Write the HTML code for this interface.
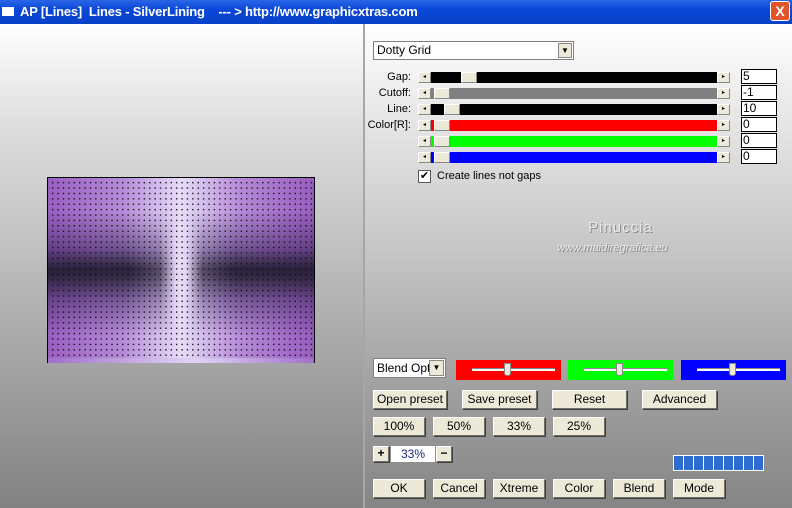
<!DOCTYPE html>
<html><head><style>
*{margin:0;padding:0;box-sizing:border-box}
body{width:792px;height:508px;position:relative;overflow:hidden;font-family:"Liberation Sans",sans-serif;font-size:11px;background:#999}
.a{position:absolute}
#title{left:0;top:0;width:792px;height:24px;background:linear-gradient(#2a66e6,#0a46d8 40%,#0842c8);color:#fff;font-size:13px;font-weight:bold;line-height:24px;letter-spacing:-0.2px}
#left{left:0;top:24px;width:363px;height:484px;background:linear-gradient(#fff 0%,#dcdcdc 22%,#b0b0b0 60%,#828282 100%)}
#div{left:363px;top:24px;width:2px;height:484px;background:#a8a89a}
#right{left:365px;top:24px;width:427px;height:484px;background:linear-gradient(#fff 0%,#ececec 15%,#c8c8c8 45%,#a4a4a4 72%,#858585 100%)}
#img{left:47px;top:177px;width:268px;height:186px;border:1px solid #000;border-bottom:none;overflow:hidden;
background:linear-gradient(90deg,#9a5ec2,#b58ad8 28%,#e6dcf8 50%,#b68ad8 72%,#985cc0)}
#band{position:absolute;left:0;top:0;right:0;bottom:0;
background:linear-gradient(transparent 18%,rgba(60,40,90,.55) 38%,rgba(35,30,50,.95) 49%,rgba(35,30,50,.9) 53%,rgba(60,40,90,.5) 66%,transparent 85%);
-webkit-mask-image:linear-gradient(90deg,#000 30%,rgba(0,0,0,.75) 42%,transparent 48%,transparent 52%,rgba(0,0,0,.75) 58%,#000 70%);
mask-image:linear-gradient(90deg,#000 30%,rgba(0,0,0,.75) 42%,transparent 48%,transparent 52%,rgba(0,0,0,.75) 58%,#000 70%)}
#dots{position:absolute;left:0;top:0;right:0;bottom:5px;background:radial-gradient(circle,#111 0.6px,transparent 0.9px) 2px 2px/5.4px 5.4px}
#img:after{content:"";position:absolute;left:0;right:0;bottom:0;height:5px;background:linear-gradient(90deg,#a070c8,#e0d4f6 55%,#a070c8)}
.btn{position:absolute;background:#ece9d8;border:1px solid;border-color:#fff #716f64 #716f64 #fff;box-shadow:1px 1px 0 #404040;text-align:center;font-size:12px;color:#000}
.lbl{position:absolute;width:60px;text-align:right;font-size:11px;color:#000}
.sb{position:absolute;width:13px;height:11px;background:#ece9d8;border:1px solid;border-color:#fff #888 #888 #fff;font-size:6px;line-height:9px;text-align:center}
.tr{position:absolute;left:431px;width:286px;height:11px}
.th{position:absolute;width:16px;height:11px;background:#ece9d8;border:1px solid;border-color:#fff #888 #888 #fff}
.vb{position:absolute;left:741px;width:36px;height:15px;background:#fff;border:1px solid #000;font-size:12px;line-height:13px;padding-left:1px}
.cb{position:absolute;height:20px;top:360px}
.cb i{position:absolute;left:16px;right:6px;top:8px;height:3px;background:#fff;border-top:1px solid #888}
.cb b{position:absolute;top:3px;width:7px;height:13px;background:#ece9d8;border:1px solid #888;border-radius:0 0 3px 3px}
</style></head><body>
<div id="title" class="a"><span class="a" style="left:2px;top:7px;width:12px;height:9px;background:#fff"></span><span class="a" style="left:20px">AP [Lines]&nbsp; Lines - SilverLining &nbsp;&nbsp; --- &gt; http://www.graphicxtras.com</span>
<span class="a" style="left:770px;top:1px;width:20px;height:20px;background:#e0542c;border:1px solid #fff;border-radius:3px;text-align:center;line-height:18px;font-size:14px">X</span></div>
<div id="left" class="a"></div>
<div id="div" class="a"></div>
<div id="right" class="a"></div>
<div id="img" class="a"><div id="band"></div><div id="dots"></div></div>

<div class="a" style="left:373px;top:41px;width:201px;height:19px;background:#fff;border:1px solid #7f7f7f;font-size:12px;line-height:17px;padding-left:3px">Dotty Grid<span class="a" style="right:1px;top:1px;width:14px;height:15px;background:#ece9d8;border:1px solid #888;font-size:8px;line-height:13px;text-align:center">▼</span></div>

<div class="lbl" style="left:351px;top:71px">Gap:</div>
<div class="lbl" style="left:351px;top:87px">Cutoff:</div>
<div class="lbl" style="left:351px;top:103px">Line:</div>
<div class="lbl" style="left:351px;top:119px">Color[R]:</div>

<div class="sb" style="left:418px;top:72px">◂</div><div class="tr" style="top:72px;background:#000"></div><div class="th" style="left:461px;top:72px"></div><div class="sb" style="left:717px;top:72px">▸</div>
<div class="sb" style="left:418px;top:88px">◂</div><div class="tr" style="top:88px;background:#808080"></div><div class="th" style="left:434px;top:88px"></div><div class="sb" style="left:717px;top:88px">▸</div>
<div class="sb" style="left:418px;top:104px">◂</div><div class="tr" style="top:104px;background:#000"></div><div class="th" style="left:444px;top:104px"></div><div class="sb" style="left:717px;top:104px">▸</div>
<div class="sb" style="left:418px;top:120px">◂</div><div class="tr" style="top:120px;background:#f00"></div><div class="th" style="left:434px;top:120px"></div><div class="sb" style="left:717px;top:120px">▸</div>
<div class="sb" style="left:418px;top:136px">◂</div><div class="tr" style="top:136px;background:#0f0"></div><div class="th" style="left:434px;top:136px"></div><div class="sb" style="left:717px;top:136px">▸</div>
<div class="sb" style="left:418px;top:152px">◂</div><div class="tr" style="top:152px;background:#00f"></div><div class="th" style="left:434px;top:152px"></div><div class="sb" style="left:717px;top:152px">▸</div>

<div class="vb" style="top:69px">5</div>
<div class="vb" style="top:85px">-1</div>
<div class="vb" style="top:101px">10</div>
<div class="vb" style="top:117px">0</div>
<div class="vb" style="top:133px">0</div>
<div class="vb" style="top:149px">0</div>

<div class="a" style="left:418px;top:170px;width:13px;height:13px;background:#fff;border:1px solid #555;font-size:11px;line-height:11px;text-align:center">✔</div>
<div class="a" style="left:437px;top:170px;font-size:11px">Create lines not gaps</div>

<div class="a" style="left:588px;top:219px;font-size:15px;color:#e8e8e8;text-shadow:1px 1px 0 #888;letter-spacing:1px">Pinuccia</div>
<div class="a" style="left:557px;top:242px;font-size:11px;font-style:italic;color:#e8e8e8;text-shadow:1px 1px 0 #888">www.maidiregrafica.eu</div>

<div class="a" style="left:373px;top:358px;width:73px;height:20px;background:#fff;border:1px solid #7f7f7f;font-size:12px;line-height:18px;padding-left:3px;overflow:hidden;white-space:nowrap">Blend Optio<span class="a" style="right:1px;top:1px;width:15px;height:16px;background:#ece9d8;border:1px solid #888;font-size:8px;line-height:14px;text-align:center">▼</span></div>
<div class="cb" style="left:456px;width:105px;background:#f00"><i></i><b style="left:48px"></b></div>
<div class="cb" style="left:568px;width:105px;background:#0f0"><i></i><b style="left:48px"></b></div>
<div class="cb" style="left:681px;width:105px;background:#00f"><i></i><b style="left:48px"></b></div>

<div class="btn" style="left:373px;top:390px;width:74px;height:19px;line-height:17px">Open preset</div>
<div class="btn" style="left:462px;top:390px;width:75px;height:19px;line-height:17px">Save preset</div>
<div class="btn" style="left:552px;top:390px;width:75px;height:19px;line-height:17px">Reset</div>
<div class="btn" style="left:642px;top:390px;width:75px;height:19px;line-height:17px">Advanced</div>

<div class="btn" style="left:373px;top:417px;width:52px;height:19px;line-height:17px">100%</div>
<div class="btn" style="left:433px;top:417px;width:52px;height:19px;line-height:17px">50%</div>
<div class="btn" style="left:493px;top:417px;width:52px;height:19px;line-height:17px">33%</div>
<div class="btn" style="left:553px;top:417px;width:52px;height:19px;line-height:17px">25%</div>

<div class="btn" style="left:373px;top:446px;width:16px;height:16px;line-height:13px;font-weight:bold">+</div>
<div class="a" style="left:391px;top:446px;width:44px;height:16px;background:#fff;color:#1a237e;font-size:12px;text-align:center;line-height:16px">33%</div>
<div class="btn" style="left:436px;top:446px;width:16px;height:16px;line-height:13px;font-weight:bold">−</div>

<div class="a" style="left:673px;top:455px;width:91px;height:16px;background:#fff;padding:1px;display:flex;gap:1px">
<span style="flex:1;background:#2e6cd0"></span><span style="flex:1;background:#2e6cd0"></span><span style="flex:1;background:#2e6cd0"></span><span style="flex:1;background:#2e6cd0"></span><span style="flex:1;background:#2e6cd0"></span><span style="flex:1;background:#2e6cd0"></span><span style="flex:1;background:#2e6cd0"></span><span style="flex:1;background:#2e6cd0"></span><span style="flex:1;background:#2e6cd0"></span></div>

<div class="btn" style="left:373px;top:479px;width:52px;height:19px;line-height:17px">OK</div>
<div class="btn" style="left:433px;top:479px;width:52px;height:19px;line-height:17px">Cancel</div>
<div class="btn" style="left:493px;top:479px;width:52px;height:19px;line-height:17px">Xtreme</div>
<div class="btn" style="left:553px;top:479px;width:52px;height:19px;line-height:17px">Color</div>
<div class="btn" style="left:613px;top:479px;width:52px;height:19px;line-height:17px">Blend</div>
<div class="btn" style="left:673px;top:479px;width:52px;height:19px;line-height:17px">Mode</div>
</body></html>
